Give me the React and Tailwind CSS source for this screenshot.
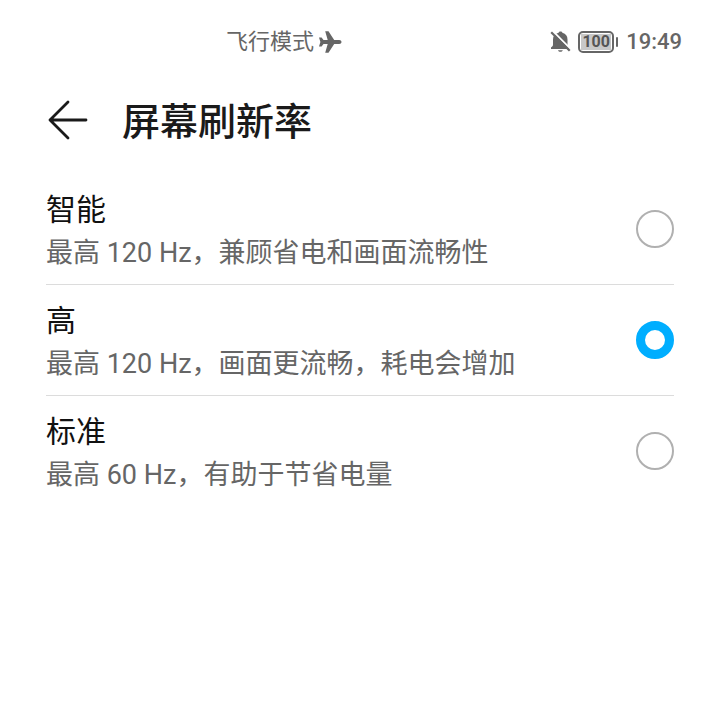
import { useState } from "react";
import clsx from "clsx";

const OPTIONS = [
  { id: "smart", label: "智能", hint: "最高 120 Hz，兼顾省电和画面流畅性" },
  { id: "high", label: "高", hint: "最高 120 Hz，画面更流畅，耗电会增加" },
  { id: "standard", label: "标准", hint: "最高 60 Hz，有助于节省电量" },
];

function PlaneIcon() {
  return (
    <svg viewBox="0 0 24 24" className="h-6 w-6 fill-[#666666]" aria-hidden="true">
      <path d="M23.500 12c0-1.200-1-2-2.300-2h-5L10.500 1.300H7.200L9.700 10H5.500L3.600 7.400H1L2.400 12 1 16.600h2.600L5.500 14h4.200l-2.500 8.700h3.300L16.200 14h5c1.300 0 2.300-.8 2.300-2Z" />
    </svg>
  );
}

function BellOffIcon() {
  return (
    <svg viewBox="0 0 24 24" className="h-6 w-6" aria-hidden="true">
      <path
        d="M12.500 1.500c-1 0-1.700.5-1.900 1.200C7 3.500 5 6 5 9.400v5.100c0 1.300-.7 2.100-2 3V19h18.500v-1.500c-1.300-.9-2-1.700-2-3V9.400c0-3.400-1.600-5.900-5.100-6.700-.2-.7-.9-1.200-1.900-1.200ZM10 20.300c.4 1 1.300 1.500 2.400 1.500s2-.5 2.400-1.500Z"
        fill="#666666"
      />
      <path d="M4.600.9 24 20.300" stroke="#ffffff" strokeWidth="2" />
      <path d="M3.200 2.300 21.700 20.800" stroke="#666666" strokeWidth="2.200" />
    </svg>
  );
}

function Battery({ level }) {
  return (
    <div className="flex items-center gap-0.5">
      <div className="rounded-[5px] border-2 border-[#666666] p-px">
        <div className="flex h-4 w-[30px] items-center justify-center bg-[#c8c8c8] text-base font-bold text-[#555555]">
          {level}
        </div>
      </div>
      <span className="h-2.5 w-0.5 rounded-full bg-[#666666]" />
    </div>
  );
}

function StatusBar() {
  return (
    <div className="grid grid-cols-[1fr_auto_1fr] items-center pt-6 pr-[38px] text-[22px] leading-9 text-[#666666]">
      <div />
      <div className="flex items-center gap-1 pr-[114px]">
        <span>飞行模式</span>
        <PlaneIcon />
      </div>
      <div className="flex items-center justify-end gap-2">
        <div className="flex items-center gap-1.5">
          <BellOffIcon />
          <Battery level={100} />
        </div>
        <time className="font-medium">19:49</time>
      </div>
    </div>
  );
}

function OptionRow({ option, checked, last, onSelect }) {
  return (
    <label
      className={clsx(
        "flex cursor-pointer items-center justify-between border-b",
        last ? "border-transparent" : "border-[#dcdcdc]"
      )}
    >
      <span className="flex flex-col pt-3.5 pb-2.5">
        <span className="text-[30px] leading-[44px] text-[#111111]">{option.label}</span>
        <span className="text-[27px] leading-[42px] text-[#666666]">{option.hint}</span>
      </span>
      <input
        type="radio"
        name="refresh-rate"
        checked={checked}
        onChange={() => onSelect(option.id)}
        className="h-[38px] w-[38px] shrink-0 appearance-none rounded-full border-2 border-[#b0b0b0] bg-white checked:border-[9px] checked:border-[#00aeff]"
      />
    </label>
  );
}

export default function App() {
  const [selected, setSelected] = useState("high");

  return (
    <div className="min-h-screen bg-white font-[Roboto,'Noto_Sans_CJK_SC',sans-serif]" lang="zh-CN">
      <StatusBar />

      <header className="flex items-center gap-[34px] px-[46px] pt-[34px]">
        <button type="button" aria-label="返回" className="pb-1">
          <svg viewBox="0 0 42 42" className="h-[42px] w-[42px]" fill="none" stroke="#1a1a1a" strokeWidth="2.800" strokeLinecap="round" strokeLinejoin="round">
            <path d="M22 3 4 21l18 18M4 21h36" />
          </svg>
        </button>
        <h1 className="text-[38px] leading-[56px] font-medium text-[#1a1a1a]">屏幕刷新率</h1>
      </header>

      <main className="px-[46px] pt-6">
        {OPTIONS.map((option, index) => (
          <OptionRow
            key={option.id}
            option={option}
            checked={option.id === selected}
            last={index === OPTIONS.length - 1}
            onSelect={setSelected}
          />
        ))}
      </main>
    </div>
  );
}
